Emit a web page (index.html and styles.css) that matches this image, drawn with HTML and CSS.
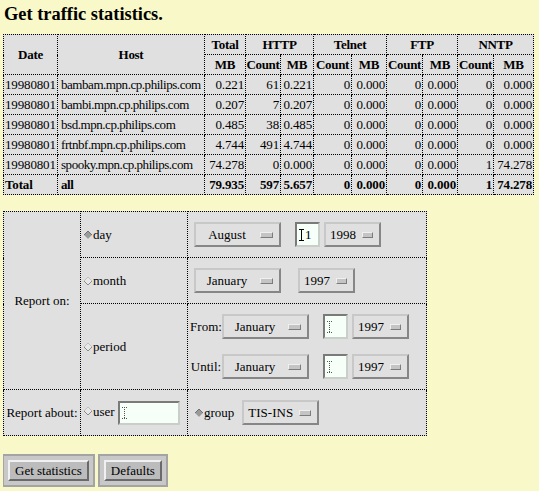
FILE: index.html
```html
<!DOCTYPE html>
<html lang="en">
<head>
    <meta charset="UTF-8">
    <title>Get traffic statistics</title>
    <link rel="stylesheet" href="styles.css">
</head>
<body>
<h1>Get traffic statistics.</h1>

<table class="stats">
    <colgroup>
        <col style="width:54px"><col style="width:147px"><col style="width:41px">
        <col style="width:35px"><col style="width:33px">
        <col style="width:38px"><col style="width:35px">
        <col style="width:36px"><col style="width:35px">
        <col style="width:36px"><col style="width:40px">
    </colgroup>
    <tr>
        <th rowspan="2">Date</th>
        <th rowspan="2">Host</th>
        <th>Total</th>
        <th colspan="2">HTTP</th>
        <th colspan="2">Telnet</th>
        <th colspan="2">FTP</th>
        <th colspan="2">NNTP</th>
    </tr>
    <tr>
        <th>MB</th>
        <th>Count</th><th>MB</th>
        <th>Count</th><th>MB</th>
        <th>Count</th><th>MB</th>
        <th>Count</th><th>MB</th>
    </tr>
    <tr>
        <td>19980801</td><td class="h">bambam.mpn.cp.philips.com</td><td class="n">0.221</td>
        <td class="n">61</td><td class="n">0.221</td><td class="n">0</td><td class="n">0.000</td>
        <td class="n">0</td><td class="n">0.000</td><td class="n">0</td><td class="n">0.000</td>
    </tr>
    <tr>
        <td>19980801</td><td class="h">bambi.mpn.cp.philips.com</td><td class="n">0.207</td>
        <td class="n">7</td><td class="n">0.207</td><td class="n">0</td><td class="n">0.000</td>
        <td class="n">0</td><td class="n">0.000</td><td class="n">0</td><td class="n">0.000</td>
    </tr>
    <tr>
        <td>19980801</td><td class="h">bsd.mpn.cp.philips.com</td><td class="n">0.485</td>
        <td class="n">38</td><td class="n">0.485</td><td class="n">0</td><td class="n">0.000</td>
        <td class="n">0</td><td class="n">0.000</td><td class="n">0</td><td class="n">0.000</td>
    </tr>
    <tr>
        <td>19980801</td><td class="h">frtnbf.mpn.cp.philips.com</td><td class="n">4.744</td>
        <td class="n">491</td><td class="n">4.744</td><td class="n">0</td><td class="n">0.000</td>
        <td class="n">0</td><td class="n">0.000</td><td class="n">0</td><td class="n">0.000</td>
    </tr>
    <tr>
        <td>19980801</td><td class="h">spooky.mpn.cp.philips.com</td><td class="n">74.278</td>
        <td class="n">0</td><td class="n">0.000</td><td class="n">0</td><td class="n">0.000</td>
        <td class="n">0</td><td class="n">0.000</td><td class="n">1</td><td class="n">74.278</td>
    </tr>
    <tr class="total">
        <td>Total</td><td class="h">all</td><td class="n">79.935</td>
        <td class="n">597</td><td class="n">5.657</td><td class="n">0</td><td class="n">0.000</td>
        <td class="n">0</td><td class="n">0.000</td><td class="n">1</td><td class="n">74.278</td>
    </tr>
</table>

<form class="query">
    <table class="opts">
        <colgroup>
            <col style="width:77px"><col style="width:107px"><col style="width:239px">
        </colgroup>
        <tr>
            <td rowspan="3" class="label">Report on:</td>
            <td class="choice"><svg class="radio" width="10" height="10"><polygon points="5,1 9,5 5,9 1,5" fill="#9a9a9a"/><path d="M1 5L5 1L9 5" stroke="#707070" fill="none"/><path d="M1 5L5 9L9 5" stroke="#c4c4c4" fill="none"/></svg>day</td>
            <td class="ctl">
                <div class="line indent">
                    <span class="menu month"><span class="txt">August</span><span class="ind"></span></span>
                    <span class="field gap14"><svg class="caret" width="5" height="12"><path d="M0 0.5H5M2.5 0V12M0 11.5H5" stroke="#000" fill="none"/></svg>1</span>
                    <span class="menu year gap4"><span class="txt">1998</span><span class="ind"></span></span>
                </div>
            </td>
        </tr>
        <tr>
            <td class="choice"><svg class="radio" width="10" height="10"><polygon points="5,1 9,5 5,9 1,5" fill="#e8e8e8"/><path d="M1 5L5 1L9 5" stroke="#c0c0c0" fill="none"/><path d="M1 5L5 9L9 5" stroke="#8c8c8c" fill="none"/></svg>month</td>
            <td class="ctl">
                <div class="line indent">
                    <span class="menu month"><span class="txt">January</span><span class="ind"></span></span>
                    <span class="menu year gap17"><span class="txt">1997</span><span class="ind"></span></span>
                </div>
            </td>
        </tr>
        <tr>
            <td class="choice"><svg class="radio" width="10" height="10"><polygon points="5,1 9,5 5,9 1,5" fill="#e8e8e8"/><path d="M1 5L5 1L9 5" stroke="#c0c0c0" fill="none"/><path d="M1 5L5 9L9 5" stroke="#8c8c8c" fill="none"/></svg>period</td>
            <td class="ctl">
                <div class="line">
                    <span class="lbl">From:</span>
                    <span class="menu month"><span class="txt">January</span><span class="ind"></span></span>
                    <span class="field gap14"><svg class="caret" width="5" height="12"><path d="M0 0.5H5M2.5 0V12M0 11.5H5" stroke="#555" stroke-dasharray="1 1" fill="none"/></svg></span>
                    <span class="menu year gap4"><span class="txt">1997</span><span class="ind"></span></span>
                </div>
                <div class="line second">
                    <span class="lbl">Until:</span>
                    <span class="menu month"><span class="txt">January</span><span class="ind"></span></span>
                    <span class="field gap14"><svg class="caret" width="5" height="12"><path d="M0 0.5H5M2.5 0V12M0 11.5H5" stroke="#555" stroke-dasharray="1 1" fill="none"/></svg></span>
                    <span class="menu year gap4"><span class="txt">1997</span><span class="ind"></span></span>
                </div>
            </td>
        </tr>
        <tr>
            <td class="label">Report about:</td>
            <td class="choice"><svg class="radio" width="10" height="10"><polygon points="5,1 9,5 5,9 1,5" fill="#e8e8e8"/><path d="M1 5L5 1L9 5" stroke="#c0c0c0" fill="none"/><path d="M1 5L5 9L9 5" stroke="#8c8c8c" fill="none"/></svg>user<span class="field user"><svg class="caret" width="5" height="12"><path d="M0 0.5H5M2.5 0V12M0 11.5H5" stroke="#555" stroke-dasharray="1 1" fill="none"/></svg></span></td>
            <td class="ctl">
                <div class="line indent">
                    <svg class="radio" width="10" height="10"><polygon points="5,1 9,5 5,9 1,5" fill="#9a9a9a"/><path d="M1 5L5 1L9 5" stroke="#707070" fill="none"/><path d="M1 5L5 9L9 5" stroke="#c4c4c4" fill="none"/></svg>group
                    <span class="menu grp"><span class="txt">TIS-INS</span><span class="ind"></span></span>
                </div>
            </td>
        </tr>
    </table>

    <div class="buttons">
        <span class="frame"><button type="button">Get statistics</button></span>
        <span class="frame"><button type="button">Defaults</button></span>
    </div>
</form>
</body>
</html>
```

FILE: styles.css
```css
body {
    margin: 3px;
    background: #f8f8c8;
    color: #000;
    font-family: "Liberation Serif", "Times New Roman", serif;
    font-size: 13px;
    line-height: 15px;
}
h1 {
    font-size: 18.4px;
    line-height: 22px;
    margin: 0 0 9px 1px;
}
table {
    border-collapse: collapse;
    table-layout: fixed;
    background: #e0e0e0;
}
td, th {
    border: 1px dotted #000;
    padding: 2px 1px;
    white-space: nowrap;
    overflow: hidden;
}
.stats {
    width: 530px;
}
.stats th {
    font-weight: bold;
    text-align: center;
    padding: 2px 0;
    letter-spacing: -0.3px;
}
.stats td {
    text-align: left;
    letter-spacing: -0.15px;
}
.stats td.h {
    padding-left: 3px;
    letter-spacing: -0.45px;
}
.stats td.n {
    text-align: right;
}
.stats .total td {
    font-weight: bold;
}

/* options form */
.query {
    margin: 16px 0 0;
}
.opts {
    width: 423px;
}
.opts td {
    vertical-align: middle;
}
.opts .label {
    text-align: center;
    padding: 0 2px;
}
.opts .choice {
    padding: 0 4px 0 2px;
}
.opts .ctl {
    padding: 10px 2px;
}
.line {
    display: flex;
    align-items: center;
}
.line.indent {
    padding-left: 4px;
}
.line.second {
    margin-top: 15px;
}
.lbl {
    width: 32px;
    text-align: center;
}
.gap4 { margin-left: 4px; }
.gap14 { margin-left: 14px; }
.gap17 { margin-left: 17px; }

.radio {
    vertical-align: -1px;
    margin-right: 0;
}

.menu {
    display: inline-flex;
    align-items: center;
    box-sizing: border-box;
    height: 25px;
    border: 2px solid;
    border-color: #c8c8c8 #868686 #868686 #c8c8c8;
    padding: 0 6px 0 4px;
    background: #e0e0e0;
}
.menu .txt {
    flex: 1;
    text-align: center;
}
.menu .ind {
    width: 11px;
    height: 4px;
    margin-left: 6px;
    border: 1px solid;
    border-color: #f0f0f0 #7c7c7c #7c7c7c #f0f0f0;
    background: #c4c4c4;
}
.menu.month { width: 87px; }
.menu.year { width: 57px; }
.menu.grp { width: 77px; margin-left: 8px; }

.field {
    display: inline-flex;
    align-items: center;
    box-sizing: border-box;
    width: 25px;
    height: 25px;
    padding-left: 2px;
    border: 2px solid;
    border-color: #7a7a7a #c8cec8 #c8cec8 #7a7a7a;
    background: #f6fff8;
}
.field.user {
    width: 62px;
    height: 24px;
    margin-left: 3px;
    vertical-align: middle;
}
.caret {
    margin-right: 1px;
}

.buttons {
    display: flex;
    gap: 3px;
    margin: 18px 0 0 -1px;
}
.frame {
    display: inline-block;
    padding: 4px;
    border: 2px solid #a4a4a4;
    background: #c8c8c8;
}
.frame button {
    font-family: "Liberation Serif", "Times New Roman", serif;
    font-size: 13px;
    line-height: 15px;
    height: 21px;
    padding: 0 5px;
    border: 2px solid;
    border-color: #f0f0f0 #6a6a6a #6a6a6a #f0f0f0;
    background: #bcbcbc;
    color: #000;
}
```
